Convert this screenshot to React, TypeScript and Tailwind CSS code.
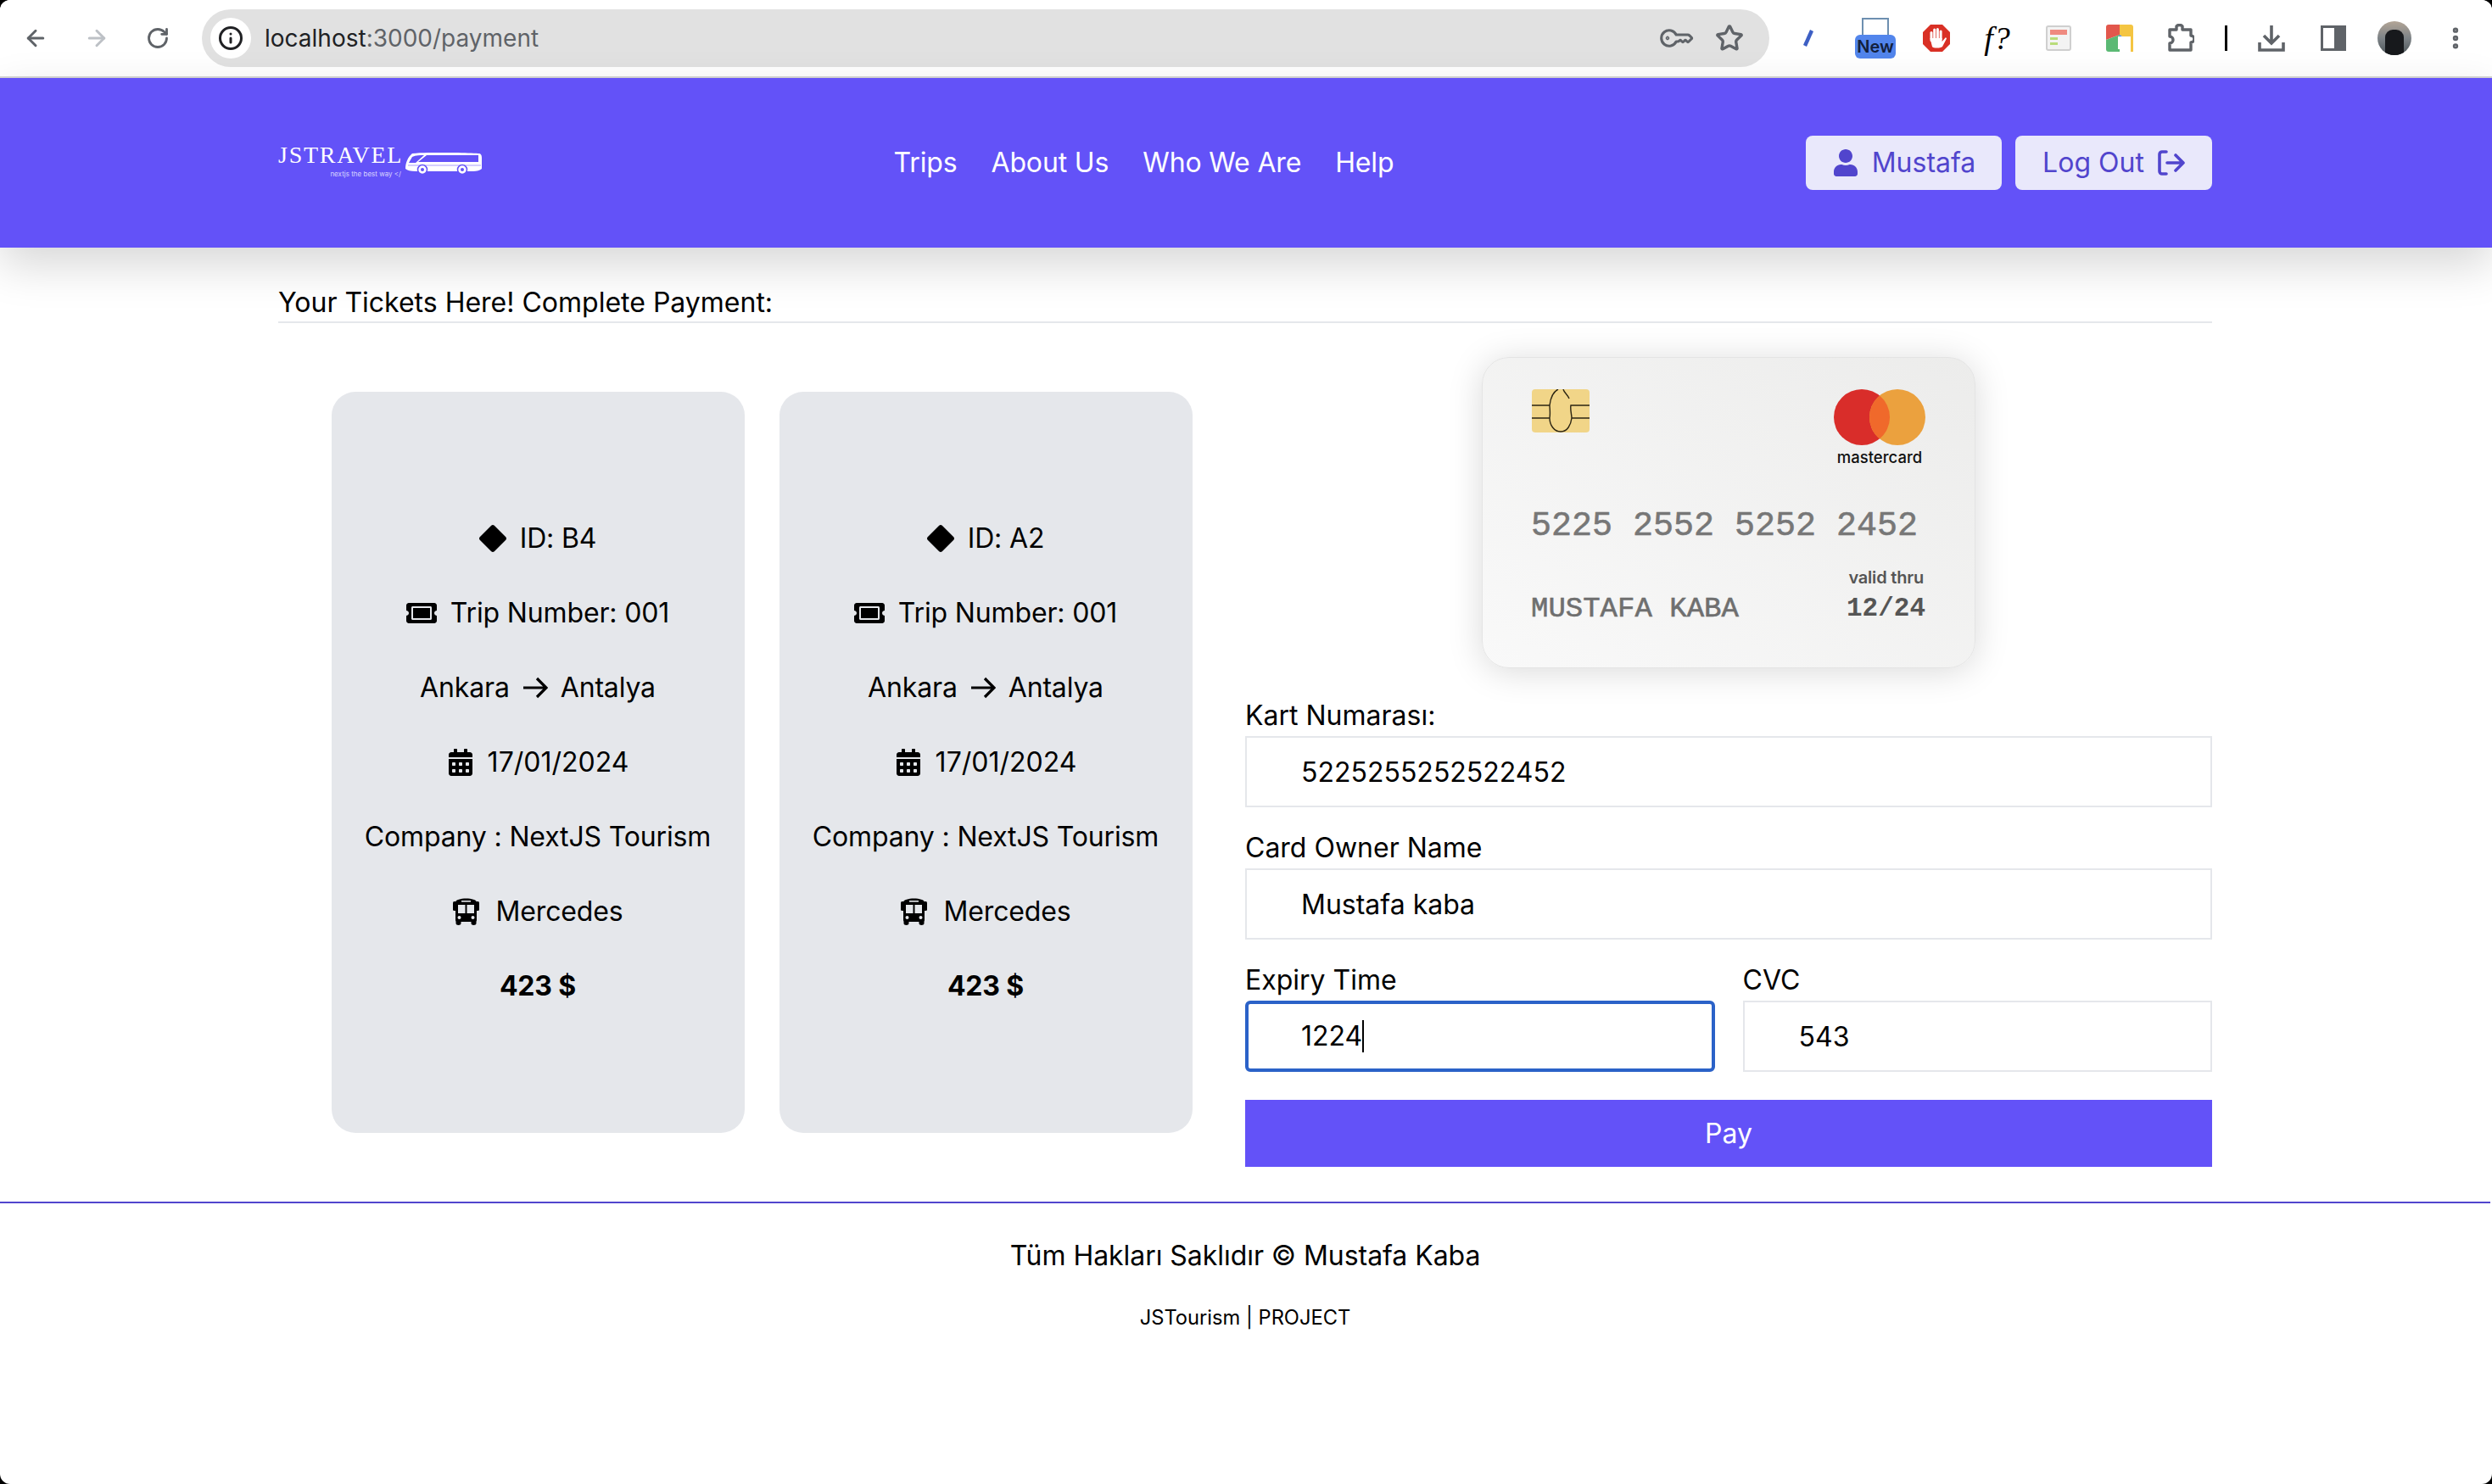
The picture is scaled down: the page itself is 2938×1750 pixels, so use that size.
import { ArrowLeft, ArrowRight, Info, KeyRound, MoreVertical, RotateCw, Star } from 'lucide-react'
import { FaCalendarAlt, FaTicketAlt, FaUser } from 'react-icons/fa'
import { FaDiamond } from 'react-icons/fa6'

const SEATS = [{ id: 'B4' }, { id: 'A2' }]

function Toolbar() {
  return (
    <div className="flex h-[90px] items-center rounded-t-[12px] bg-white pl-[6px]">
      <div className="flex w-[72px] justify-center text-[#5f6368]"><ArrowLeft size={30} strokeWidth={2.4} /></div>
      <div className="flex w-[72px] justify-center text-[#bdc1c6]"><ArrowRight size={30} strokeWidth={2.4} /></div>
      <div className="flex w-[72px] justify-center text-[#5f6368]"><RotateCw size={28} strokeWidth={2.4} /></div>

      {/* adres çubuğu */}
      <div className="ml-[16px] flex h-[68px] w-[1848px] items-center rounded-full bg-[#e1e1e1] pl-[10px] pr-[30px]">
        <div className="flex h-[48px] w-[48px] items-center justify-center rounded-full bg-white text-[#202124]">
          <Info size={30} strokeWidth={2.4} />
        </div>
        <span className="ml-[16px] text-[28px] text-[#202124]">
          localhost<span className="text-[#5f6368]">:3000/payment</span>
        </span>
        <div className="ml-auto flex items-center gap-[30px] text-[#5f6368]">
          <KeyRound size={34} strokeWidth={2.2} className="-scale-x-100 rotate-[-45deg]" />
          <Star size={34} strokeWidth={2.4} />
        </div>
      </div>

      <div className="ml-[10px] flex w-[79px] justify-start pl-[29px]">
        <svg width="14" height="24" viewBox="0 0 14 24"><path d="M9 2 L13 4 L5 22 L1 20 Z" fill="#3d5fc4" /></svg>
      </div>
      <div className="flex w-[72px] justify-center">
        <div className="relative h-[48px] w-[48px]">
          <div className="mx-auto h-[28px] w-[32px] border-2 border-[#6d8fb0] bg-white" />
          <div className="absolute bottom-0 left-0 flex h-[28px] w-[48px] items-center justify-center rounded-[6px] bg-[#5285ec] text-[20px] font-semibold text-[#12203c]">New</div>
        </div>
      </div>
      <div className="flex w-[72px] justify-center">
        <svg width="34" height="34" viewBox="0 0 34 34">
          <path d="M10 1 H24 L33 10 V24 L24 33 H10 L1 24 V10 Z" fill="#d93025" />
          <g fill="#fff">
            <rect x="9.5" y="9" width="3" height="12" rx="1.5" />
            <rect x="13.2" y="5.5" width="3" height="14" rx="1.5" />
            <rect x="16.9" y="5" width="3" height="14" rx="1.5" />
            <rect x="20.6" y="7.5" width="3" height="12" rx="1.5" />
            <path d="M9.5 17 H23.6 V21 L28 16 L29 17.5 L24 27 C22 29 13 29 12 27 Z" />
          </g>
        </svg>
      </div>
      <div className="flex w-[72px] justify-center font-['Liberation_Serif',serif] text-[38px] italic leading-[38px] tracking-[1px] text-black">f?</div>
      <div className="flex w-[72px] justify-center">
        <svg width="30" height="30" viewBox="0 0 30 30">
          <rect x="1" y="1" width="28" height="28" rx="2" fill="#f3f3f3" stroke="#cfcfcf" strokeWidth="2" />
          <rect x="5" y="5" width="20" height="6" fill="#ef8a80" />
          <rect x="5" y="14" width="9" height="3" fill="#b9dc7a" />
          <rect x="5" y="20" width="9" height="3" fill="#b9dc7a" />
        </svg>
      </div>
      <div className="flex w-[72px] justify-center">
        <svg width="32" height="32" viewBox="0 0 32 32">
          <path d="M3 0 H16 V12 L0 18 V3 A3 3 0 0 1 3 0 Z" fill="#e2574c" />
          <path d="M16 0 H29 A3 3 0 0 1 32 3 V16 H22 L16 12 Z" fill="#f4c542" />
          <path d="M0 18 L16 12 V32 H3 A3 3 0 0 1 0 29 Z" fill="#5bb974" />
          <path d="M16 12 L22 16 H32 V20 H14 Z" fill="#4a86e8" />
          <rect x="14" y="14" width="15" height="15" fill="#fff" />
          <rect x="29" y="16" width="3" height="16" fill="#f4c542" />
        </svg>
      </div>
      <div className="flex w-[72px] justify-center">
        <svg width="32" height="34" viewBox="0 0 32 34" fill="none" stroke="#5f6368" strokeWidth="3.4" strokeLinejoin="round">
          <path d="M3 7 H11 V3 a4 3 0 0 1 7 0 V7 H28 V14 a4 4 0 0 1 0 8 V31 H3 V23 a4 4 0 0 0 0 -8 Z" />
        </svg>
      </div>
      <div className="flex w-[34px] justify-center"><div className="h-[30px] w-[3px] bg-black" /></div>
      <div className="flex w-[74px] justify-center">
        <svg width="34" height="34" viewBox="0 0 34 34" fill="none" stroke="#5f6368" strokeWidth="3.6">
          <path d="M17 2 V22 M8 14 L17 23 L26 14 M3 22 V31 H31 V22" />
        </svg>
      </div>
      <div className="flex w-[72px] justify-center">
        <div className="flex h-[30px] w-[30px] justify-end border-[3px] border-[#5f6368]"><div className="h-full w-[11px] bg-[#5f6368]" /></div>
      </div>
      <div className="flex w-[72px] justify-center">
        <div className="flex h-[40px] w-[40px] items-end justify-center overflow-hidden rounded-full bg-gradient-to-b from-[#b3a596] via-[#7d8387] to-[#4d5559]">
          <div className="h-[30px] w-[22px] rounded-t-[9px] bg-[#17191c]" />
        </div>
      </div>
      <div className="flex w-[72px] justify-center text-[#5f6368]"><MoreVertical size={32} strokeWidth={2.8} /></div>
    </div>
  )
}

function Logo() {
  return (
    <div className="flex w-[240px] items-center text-white">
      <div className="flex w-[145px] flex-col items-end">
        <span className="-mr-[2px] -mt-[4px] font-['Liberation_Serif',serif] text-[28px] leading-[28px] tracking-[1.7px]">JSTRAVEL</span>
        <span className="mt-[2px] text-[8px] leading-[12px] text-[#d8d4ff]">nextjs the best way &lt;/</span>
      </div>
      <svg className="ml-[5px] mt-[2px]" width="90" height="26" viewBox="0 0 90 26">
        <path d="M8 1 C28 -1 70 0 86 1 C89 1 90 3 90 6 V19 C88 21 84 22 80 22 H12 C6 22 2 21 0 19 C0 12 3 5 8 1 Z" fill="#fff" />
        <path d="M8 5 C12 3 18 3 22 3 L12 12 H4 Z M25 3 H86 V11 H15 Z" fill="#6352f8" />
        <rect x="3" y="14" width="86" height="2" fill="#d5d0fd" />
        <circle cx="20" cy="20" r="5.5" fill="#fff" stroke="#6352f8" strokeWidth="1.5" />
        <circle cx="20" cy="20" r="2" fill="#6352f8" />
        <circle cx="67" cy="20" r="5.5" fill="#fff" stroke="#6352f8" strokeWidth="1.5" />
        <circle cx="67" cy="20" r="2" fill="#6352f8" />
      </svg>
    </div>
  )
}

function Navbar() {
  return (
    <nav className="relative z-10 h-[200px] bg-[#6352f8] pr-[2px] shadow-[0_20px_50px_rgba(0,0,0,0.16)]">
      <div className="mx-auto flex h-full w-[2280px] items-center justify-between">
        <Logo />
        <div className="flex items-center gap-[40px] text-[32px] tracking-[-0.15px] text-white">
          <a>Trips</a>
          <a>About Us</a>
          <a>Who We Are</a>
          <a>Help</a>
        </div>
        <div className="flex gap-[16px] text-[32px] text-[#5145cd]">
          <button className="flex h-[64px] w-[231px] items-center justify-center gap-[15px] rounded-[8px] bg-[#e9e8fb]">
            <FaUser size={32} />
            Mustafa
          </button>
          <button className="flex h-[64px] w-[232px] items-center justify-center gap-[16px] rounded-[8px] bg-[#e9e8fb]">
            Log Out
            <svg width="32" height="30" viewBox="0 0 32 30" fill="none" stroke="currentColor" strokeWidth="3.6" strokeLinecap="round" strokeLinejoin="round">
              <path d="M10 2 H5 A3 3 0 0 0 2 5 V25 A3 3 0 0 0 5 28 H10 M11 15 H30 M21 6 L30 15 L21 24" />
            </svg>
          </button>
        </div>
      </div>
    </nav>
  )
}

function BusIcon() {
  return (
    <svg width="31" height="32" viewBox="0 0 31 32" fill="currentColor">
      <path d="M3 5 C3 -1 28 -1 28 5 V26 C28 27 27.5 27.5 27.5 28 V30 C27.5 32.5 21.5 32.5 21.5 30 V28 H9.5 V30 C9.5 32.5 3.5 32.5 3.5 30 V28 C3.5 27.5 3 27 3 26 Z" />
      <rect x="0" y="4" width="4" height="11" rx="1.5" />
      <rect x="27" y="4" width="4" height="11" rx="1.5" />
      <rect x="10" y="3" width="11" height="1.6" fill="#e5e7eb" />
      <rect x="6" y="8" width="8.5" height="10" fill="#e5e7eb" />
      <rect x="16.5" y="8" width="8.5" height="10" fill="#e5e7eb" />
      <circle cx="7.5" cy="23" r="2" fill="#e5e7eb" />
      <circle cx="23.5" cy="23" r="2" fill="#e5e7eb" />
    </svg>
  )
}

function SeatCard({ id }: { id: string }) {
  return (
    <div className="flex h-[874px] w-[487px] flex-col items-center justify-center gap-[40px] rounded-[28px] bg-[#e5e7eb] text-[32px] leading-[48px] tracking-[-0.15px] text-black">
      <div className="flex items-center gap-[16px]"><FaDiamond size={32} />ID: {id}</div>
      <div className="flex items-center gap-[16px]"><FaTicketAlt size={36} />Trip Number: 001</div>
      <div className="flex items-center gap-[15px]">
        Ankara
        <svg width="30" height="26" viewBox="0 0 30 26" fill="none" stroke="currentColor" strokeWidth="3.2">
          <path d="M1 13 H28 M17 2 L28 13 L17 24" />
        </svg>
        Antalya
      </div>
      <div className="flex items-center gap-[16px] tracking-normal"><FaCalendarAlt size={32} />17/01/2024</div>
      <div>Company : NextJS Tourism</div>
      <div className="flex items-center gap-[20px]"><BusIcon />Mercedes</div>
      <div className="font-bold">423 $</div>
    </div>
  )
}

function CreditCard() {
  return (
    <div className="mx-auto flex h-[367px] w-[582px] flex-col rounded-[32px] border border-[#e4e4e4] bg-gradient-to-bl from-[#ececeb] to-[#f9f9f9] pl-[58px] pr-[58px] pt-[37px] shadow-[0_4px_40px_rgba(0,0,0,0.15)]">
      <div className="flex items-start justify-between">
        <svg width="68" height="51" viewBox="0 0 68 51" fill="none">
          <rect width="68" height="51" rx="4" fill="#f1d588" />
          <path d="M0 19 H21 C22 10 25 3 31 0 M37 0 C38 4 42 6 44 11 M68 19 H46 C45 24 47 30 47 34 C46 42 42 50 34 50 C26 50 21 42 21 34 C22 28 21 22 21 19 M0 34 H21 M47 34 H68" stroke="#2b2412" strokeWidth="1.4" />
        </svg>
        <div className="flex flex-col items-center">
          <svg width="108" height="66" viewBox="0 0 108 66">
            <circle cx="33" cy="33" r="33" fill="#d92d2a" />
            <circle cx="75" cy="33" r="33" fill="#eba13e" />
            <path d="M54 7.5 A33 33 0 0 1 54 58.5 A33 33 0 0 1 54 7.5 Z" fill="#f0692b" />
          </svg>
          <span className="mt-[2px] text-[18.5px] font-medium leading-[24px] text-[#111]">mastercard</span>
        </div>
      </div>
      <div className="-ml-[1px] mt-[50px] font-['Liberation_Mono',monospace] text-[40px] leading-[40px] whitespace-pre text-[#777] [-webkit-text-stroke:0.6px_#777]">5225 2552 5252 2452</div>
      <div className="mt-[28px] flex items-end justify-between">
        <div className="-ml-[1px] font-['Liberation_Mono',monospace] text-[34px] leading-[36px] whitespace-pre text-[#6f6f6f] [-webkit-text-stroke:0.6px_#6f6f6f]">MUSTAFA KABA</div>
        <div className="flex flex-col items-end">
          <span className="mr-[2px] text-[20px] font-semibold leading-[24px] tracking-[-0.2px] text-[#555]">valid thru</span>
          <span className="mt-[7px] font-['Liberation_Mono',monospace] text-[31px] font-bold leading-[36px] text-[#555]">12/24</span>
        </div>
      </div>
    </div>
  )
}

function Field({ label, value, focused }: { label: string; value: string; focused?: boolean }) {
  return (
    <div className="flex flex-1 flex-col">
      <label className="h-[48px] text-[32px] leading-[48px] text-black">{label}</label>
      {focused ? (
        <div className="flex h-[84px] items-center rounded-[6px] border-4 border-[#2b62c8] pl-[62px] text-[32px] text-black">
          {value}
          <span className="h-[38px] w-[2px] bg-black" />
        </div>
      ) : (
        <input
          readOnly
          value={value}
          className="h-[84px] w-full border-2 border-[#e5e7eb] pl-[64px] text-[32px] text-black outline-none"
        />
      )}
    </div>
  )
}

export default function App() {
  return (
    <div className="min-h-[1750px] bg-black font-[Inter,sans-serif]">
      <div className="min-h-[1750px] rounded-[12px] bg-white">
        <Toolbar />
        <div className="h-[2px] bg-[#d5d5d5]" />
        <Navbar />
        <div className="w-[2936px]">
          <main className="mx-auto w-[2280px]">
            <div className="border-b-2 border-[#e5e7eb] pt-[43px] text-[32px] leading-[44px] text-black">
              Your Tickets Here! Complete Payment:
            </div>
            <div className="flex items-center pb-[41px] pt-[40px]">
              <div className="flex w-[1140px] justify-center gap-[41px]">
                {SEATS.map((s) => <SeatCard key={s.id} id={s.id} />)}
              </div>
              <div className="flex w-[1140px] flex-col">
                <CreditCard />
                <div className="mt-[32px]"><Field label="Kart Numarası:" value="5225255252522452" /></div>
                <div className="mt-[24px]"><Field label="Card Owner Name" value="Mustafa kaba" /></div>
                <div className="mt-[24px] flex gap-[33px]">
                  <Field label="Expiry Time" value="1224" focused />
                  <Field label="CVC" value="543" />
                </div>
                <button className="mt-[33px] h-[79px] bg-[#6352f8] text-[32px] text-white">Pay</button>
              </div>
            </div>
          </main>

          <footer className="flex flex-col items-center border-t-2 border-[#5145cd] pt-[38px] text-black">
            <div className="text-[32px] leading-[48px] tracking-[-0.05px]">Tüm Hakları Saklıdır © Mustafa Kaba</div>
            <div className="mt-[33px] text-[23.7px] leading-[32px]">JSTourism | PROJECT</div>
          </footer>
        </div>
      </div>
    </div>
  )
}
